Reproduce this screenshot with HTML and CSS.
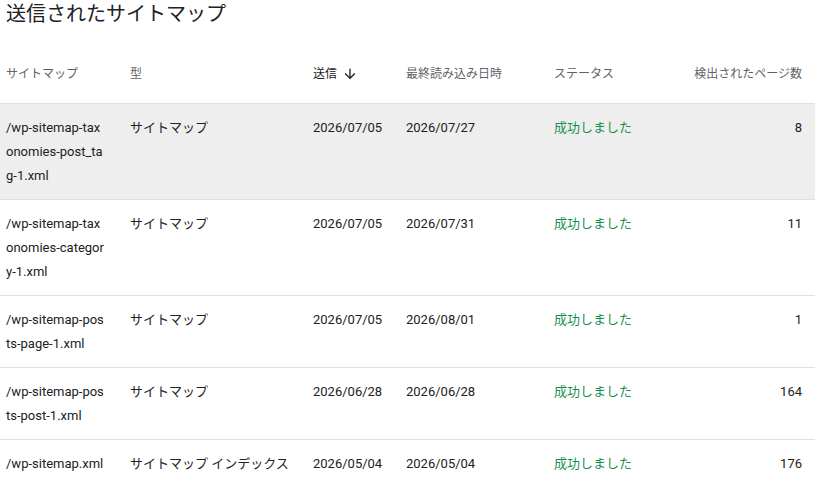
FILE: index.html
```html
<!DOCTYPE html>
<html lang="ja">
<head>
  <meta charset="UTF-8" />
  <meta name="viewport" content="width=device-width, initial-scale=1.0" />
  <title>送信されたサイトマップ</title>
  <link rel="stylesheet" href="styles.css">
</head>
<body>
  <h1 class="page-title">送信されたサイトマップ</h1>

  <div class="sitemap-table">
    <div class="row head">
      <div class="cell path">サイトマップ</div>
      <div class="cell">型</div>
      <div class="cell sorted">送信
        <svg class="sort-icon" viewBox="0 0 24 24" width="16" height="16"><path d="M20 12l-1.41-1.41L13 16.17V4h-2v12.17l-5.58-5.59L4 12l8 8 8-8z"/></svg>
      </div>
      <div class="cell">最終読み込み日時</div>
      <div class="cell">ステータス</div>
      <div class="cell num">検出されたページ数</div>
    </div>

    <div class="row selected">
      <div class="cell path">/wp-sitemap-taxonomies-post_tag-1.xml</div>
      <div class="cell">サイトマップ</div>
      <div class="cell">2026/07/05</div>
      <div class="cell">2026/07/27</div>
      <div class="cell status">成功しました</div>
      <div class="cell num">8</div>
    </div>

    <div class="row">
      <div class="cell path">/wp-sitemap-taxonomies-category-1.xml</div>
      <div class="cell">サイトマップ</div>
      <div class="cell">2026/07/05</div>
      <div class="cell">2026/07/31</div>
      <div class="cell status">成功しました</div>
      <div class="cell num">11</div>
    </div>

    <div class="row">
      <div class="cell path">/wp-sitemap-posts-page-1.xml</div>
      <div class="cell">サイトマップ</div>
      <div class="cell">2026/07/05</div>
      <div class="cell">2026/08/01</div>
      <div class="cell status">成功しました</div>
      <div class="cell num">1</div>
    </div>

    <div class="row">
      <div class="cell path">/wp-sitemap-posts-post-1.xml</div>
      <div class="cell">サイトマップ</div>
      <div class="cell">2026/06/28</div>
      <div class="cell">2026/06/28</div>
      <div class="cell status">成功しました</div>
      <div class="cell num">164</div>
    </div>

    <div class="row">
      <div class="cell path">/wp-sitemap.xml</div>
      <div class="cell">サイトマップ インデックス</div>
      <div class="cell">2026/05/04</div>
      <div class="cell">2026/05/04</div>
      <div class="cell status">成功しました</div>
      <div class="cell num">176</div>
    </div>
  </div>
</body>
</html>
```

FILE: styles.css
```css
:root {
  --text: #202124;
  --muted: #5f6368;
  --line: #e0e0e0;
  --hover: #eeeeee;
  --ok: #188f4f;
}

body {
  margin: 0;
  background: #fff;
  color: var(--text);
  font-family: Roboto, "Noto Sans CJK JP", sans-serif;
  font-size: 13px;
  overflow: hidden;
}

.page-title {
  margin: 0;
  padding: 0 6px;
  font-size: 20px;
  font-weight: 400;
  line-height: 28px;
}

.row {
  display: grid;
  grid-template-columns: 124px 183px 93px 148px 1fr 120px;
  padding: 12px 13px 11px 6px;
  border-bottom: 1px solid var(--line);
  line-height: 24px;
}

.row.head {
  padding-top: 34px;
  padding-bottom: 17px;
  font-size: 12px;
  color: var(--muted);
}

.row.selected {
  background: var(--hover);
}

.cell.path {
  padding-right: 24px;
  word-break: break-all;
}

.sorted {
  display: flex;
  align-items: center;
  gap: 5px;
  color: var(--text);
}

.sort-icon {
  fill: var(--text);
}

.status {
  color: var(--ok);
}

.num {
  text-align: right;
}
```
